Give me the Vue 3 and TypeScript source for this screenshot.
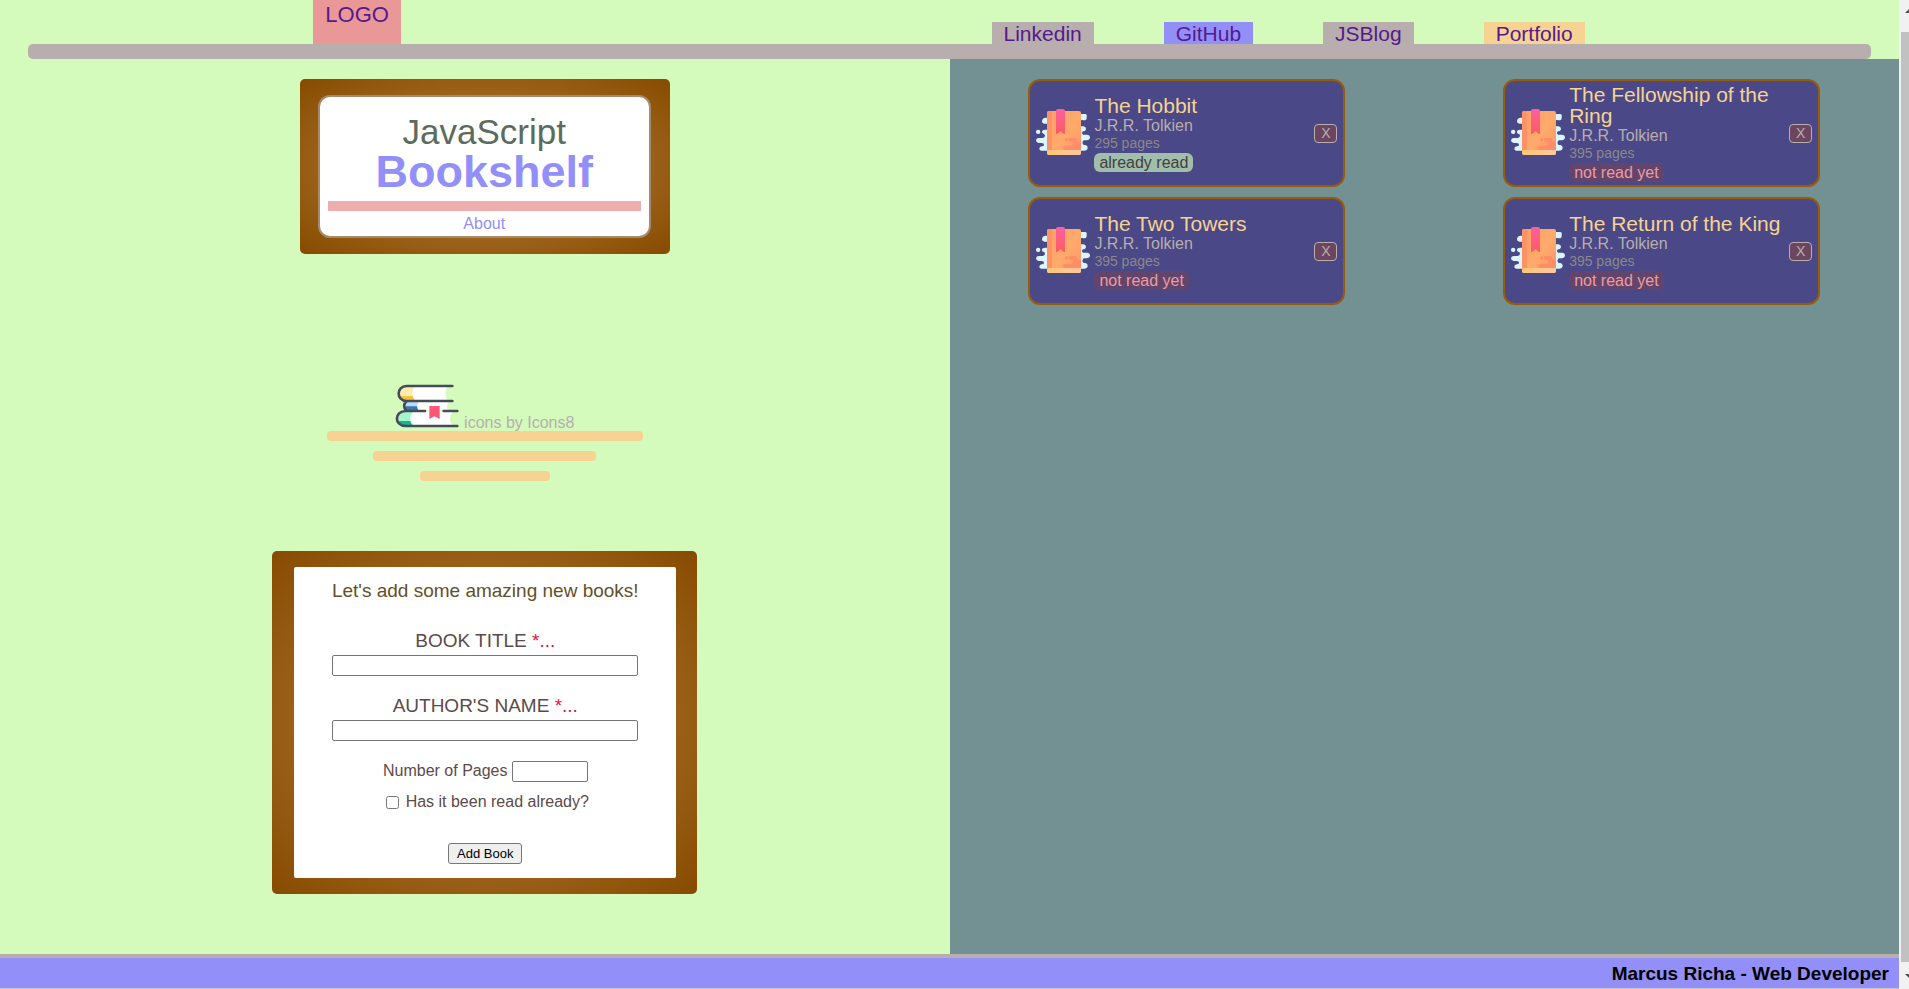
<script setup lang="ts">
import { ref } from 'vue'

interface Book {
  id: number
  title: string
  author: string
  pages: number
  read: boolean
}

const links = [
  { label: 'Linkedin', tone: 'grey' },
  { label: 'GitHub', tone: 'violet' },
  { label: 'JSBlog', tone: 'grey' },
  { label: 'Portfolio', tone: 'sand' },
]

const books = ref<Book[]>([
  { id: 1, title: 'The Hobbit', author: 'J.R.R. Tolkien', pages: 295, read: true },
  { id: 2, title: 'The Fellowship of the Ring', author: 'J.R.R. Tolkien', pages: 395, read: false },
  { id: 3, title: 'The Two Towers', author: 'J.R.R. Tolkien', pages: 395, read: false },
  { id: 4, title: 'The Return of the King', author: 'J.R.R. Tolkien', pages: 395, read: false },
])

const title = ref('')
const author = ref('')
const pages = ref<number | ''>('')
const read = ref(false)

function addBook() {
  if (!title.value || !author.value) return
  books.value.push({
    id: Date.now(),
    title: title.value,
    author: author.value,
    pages: Number(pages.value),
    read: read.value,
  })
  title.value = ''
  author.value = ''
  pages.value = ''
  read.value = false
}

function removeBook(id: number) {
  books.value = books.value.filter((book) => book.id !== id)
}
</script>

<template>
  <div class="window">
    <div class="page">
      <header>
        <div class="tabs">
          <div class="brand">
            <a class="logo" href="#">LOGO</a>
          </div>
          <nav>
            <a v-for="link in links" :key="link.label" href="#" :class="['tab', link.tone]">{{ link.label }}</a>
          </nav>
        </div>
        <div class="bar"></div>
      </header>

      <main>
        <section class="side">
          <div class="wood sign">
            <div class="plate">
              <h1>JavaScript <strong>Bookshelf</strong></h1>
              <div class="rule"></div>
              <a class="about" href="#">About</a>
            </div>
          </div>

          <div class="credit">
            <div class="credit-line">
              <svg class="stack" viewBox="285 39 192 138" aria-hidden="true">
                <path d="M318 49H442Q430 70 443 91H318Q299 89 299 70Q299 51 318 49Z" fill="#fff" />
                <path d="M318 49H345Q329 70 344 91H318Q299 89 299 70Q299 51 318 49Z" fill="#ffecae" />
                <path d="M301 78H338Q340 86 344 91H318Q306 90 301 78Z" fill="#f7c33c" />
                <path d="M325 95H446Q438 108 444 121H325Q314 118 314 108Q314 98 325 95Z" fill="#fff" />
                <path d="M325 95H356Q347 108 355 121H325Q314 118 314 108Q314 98 325 95Z" fill="#b5dcfd" />
                <path d="M315 109H351Q351 116 355 121H325Q317 118 315 109Z" fill="#3e72b3" />
                <path d="M314 124H460Q440 145 458 166H314Q295 163 295 145Q295 127 314 124Z" fill="#fff" />
                <path d="M314 124H340Q322 145 338 166H314Q295 163 295 145Q295 127 314 124Z" fill="#a5f5cd" />
                <path d="M296 153H331Q333 161 338 166H314Q300 164 296 153Z" fill="#16b590" />
                <path
                  d="M457 48H320C288 48 288 93 320 93H457M320 94C310 100 310 116 321 122M375 123H317C282 123 282 168 317 168H472M431 123H472"
                  fill="none" stroke="#454b57" stroke-width="8" stroke-linecap="round" />
                <path d="M388 108H419V147L403 139L388 147Z" fill="#ff5576" />
              </svg>
              <a href="#">icons by Icons8</a>
            </div>
            <div class="shelf wide"></div>
            <div class="shelf mid"></div>
            <div class="shelf short"></div>
          </div>

          <div class="wood entry">
            <form @submit.prevent="addBook">
              <h2>Let's add some amazing new books!</h2>
              <div class="field">
                <label for="title">BOOK TITLE <span class="required">*...</span></label>
                <input id="title" v-model="title" type="text" />
              </div>
              <div class="field">
                <label for="author">AUTHOR'S NAME <span class="required">*...</span></label>
                <input id="author" v-model="author" type="text" />
              </div>
              <div class="row count">
                <label for="pages">Number of Pages</label>
                <input id="pages" v-model="pages" type="number" />
              </div>
              <div class="row check">
                <input id="read" v-model="read" type="checkbox" />
                <label for="read">Has it been read already?</label>
              </div>
              <button class="add" type="submit">Add Book</button>
            </form>
          </div>
        </section>

        <section class="library">
          <article v-for="book in books" :key="book.id" class="card">
            <svg class="cover" viewBox="75 144 168 144" aria-hidden="true">
              <g fill="#dcf6ff">
                <rect x="78" y="209" width="13" height="13" rx="6" />
                <path d="M105 173H222Q230 173 230 164Q229 162 221 162H210V199H220Q228 200 228 206Q228 213 219 214Q213 219 219 224H232Q240 225 240 232Q240 240 230 241H221Q214 248 221 255H225Q233 256 233 264Q232 272 222 272H98Q88 272 88 266Q88 260 96 259Q102 259 102 254Q102 249 95 249H86Q78 248 78 241Q79 234 87 234H98Q105 233 105 227Q105 222 100 221Q95 220 96 214Q97 209 105 209H112V191H104Q95 190 96 182Q97 174 105 173Z" />
                <rect x="205" y="162" width="25" height="19" rx="8" />
              </g>
              <path d="M212 181H219V198H212Z" fill="#4a4887" />
              <defs>
                <linearGradient id="cover-fill" x1="0" y1="0" x2="1" y2="1">
                  <stop offset="0" stop-color="#ff9e69" />
                  <stop offset=".55" stop-color="#ffab6a" />
                  <stop offset="1" stop-color="#ff916b" />
                </linearGradient>
                <linearGradient id="ribbon-fill" x1="0" y1="0" x2="0" y2="1">
                  <stop offset="0" stop-color="#fb609f" />
                  <stop offset="1" stop-color="#ff5b62" />
                </linearGradient>
                <linearGradient id="edge-fill" x1="0" y1="0" x2="1" y2="0">
                  <stop offset="0" stop-color="#ffc773" />
                  <stop offset="1" stop-color="#ffc7a0" />
                </linearGradient>
              </defs>
              <rect x="111" y="153" width="102" height="132" rx="6" fill="url(#cover-fill)" />
              <path d="M117 153H126V270H111V159Q111 153 117 153Z" fill="#ff9265" />
              <path d="M180 234H196Q202 234 202 240Q202 246 208 246H213V270H165Q159 269 159 263Q160 257 167 257H184Q190 256 190 250Q190 246 182 245Q176 244 176 239Q176 234 180 234ZM166 235H174V244H166Z" fill="#ff8d67" />
              <path d="M111 276Q111 270 118 270H213V279Q213 285 207 285H117Q111 285 111 279Z" fill="url(#edge-fill)" />
              <path d="M138 153Q138 147 144 147H159Q165 147 165 153V222L160 221L152 213L143 221L138 222Z" fill="url(#ribbon-fill)" />
            </svg>
            <div class="info">
              <h3>{{ book.title }}</h3>
              <p class="author">{{ book.author }}</p>
              <p class="pages">{{ book.pages }} pages</p>
              <span :class="['status', book.read ? 'done' : 'todo']">{{ book.read ? 'already read' : 'not read yet' }}</span>
            </div>
            <button class="remove" type="button" :aria-label="`X, remove ${book.title}`" @click="removeBook(book.id)">X</button>
          </article>
        </section>
      </main>

      <footer>Marcus Richa - Web Developer</footer>
    </div>

    <div class="scrollbar" aria-hidden="true">
      <svg viewBox="0 0 8 32"><path d="M4 13L8 9V13Z" fill="#505050" /></svg>
      <div class="thumb"></div>
      <svg viewBox="0 0 8 27"><path d="M4 12L8 16V12Z" fill="#505050" /></svg>
    </div>
  </div>
</template>

<style>
body {
  margin: 0;
}
</style>

<style scoped>
* {
  box-sizing: border-box;
}

.window {
  display: flex;
  min-height: 100vh;
  font-family: "Liberation Sans", Arial, sans-serif;
  font-size: 16px;
  line-height: 18px;
  background: #d4fabc;
}

.page {
  flex: 1;
  min-width: 0;
  display: flex;
  flex-direction: column;
}

a {
  text-decoration: none;
}

.tabs {
  display: grid;
  grid-template-columns: 1fr 1fr;
}

.brand,
nav {
  display: flex;
  align-items: flex-end;
}

.brand {
  padding-left: 33%;
}

nav {
  gap: 70px;
  padding-left: 42px;
}

.logo,
.tab {
  color: #551a8b;
}

.logo {
  height: 44px;
  padding: 3px 12px 0;
  font-size: 22px;
  line-height: 24px;
  background: #ea9798;
}

.tab {
  height: 22px;
  padding: 0 12px;
  font-size: 21px;
  line-height: 24px;
}

.grey {
  background: #b8aead;
}

.violet {
  background: #928ff8;
}

.sand {
  background: #f6d392;
}

.bar {
  width: 97%;
  height: 15px;
  margin: 0 auto;
  border-radius: 5px;
  background: #b8aead;
}

main {
  flex: 1;
  display: grid;
  grid-template-columns: 1fr 1fr;
}

.side {
  display: flex;
  flex-direction: column;
  align-items: center;
  padding: 20px 0 60px 20px;
}

.wood {
  border-radius: 5px;
  background: radial-gradient(#bd8541, #864b00);
}

.sign {
  width: 370px;
  padding: 16px 19px 16px 18px;
}

.plate {
  padding: 15px 8px 0;
  height: 143px;
  text-align: center;
  background: #fff;
  border: 2px solid #a68a6c;
  border-radius: 12px;
}

h1 {
  margin: 0;
  font-size: 35px;
  font-weight: 400;
  line-height: 40px;
  color: #5c6b5c;
}

h1 strong {
  display: block;
  font-size: 45px;
  line-height: 40px;
  color: #928ff8;
}

.rule {
  height: 10px;
  margin: 9px 0 4px;
  background: #eeaeae;
}

.about {
  color: #928ff8;
}

.credit {
  display: flex;
  flex-direction: column;
  align-items: center;
  gap: 10px;
  margin: 130px 0 70px;
}

.credit-line {
  display: flex;
  align-items: flex-end;
  gap: 5px;
  height: 47px;
  margin-bottom: -10px;
}

.credit-line a {
  line-height: 16px;
  color: #b8aead;
}

.stack {
  width: 64px;
  height: 46px;
  margin-bottom: 2px;
}

.shelf {
  height: 10px;
  border-radius: 4px;
  background: #f6d392;
}

.wide {
  width: 316px;
}

.mid {
  width: 223px;
}

.short {
  width: 130px;
}

.entry {
  width: 425px;
  padding: 16px 21px 16px 22px;
}

form {
  display: flex;
  flex-direction: column;
  align-items: center;
  padding: 13px 38px 14px;
  border-radius: 2px;
  background: #fff;
  color: #5b4a4a;
}

h2 {
  margin: 0 0 28px;
  font-size: 19px;
  font-weight: 400;
  line-height: 22px;
  white-space: nowrap;
  color: #63502a;
}

.field {
  display: flex;
  flex-direction: column;
  gap: 3px;
  width: 100%;
  margin-bottom: 19px;
  text-align: center;
  font-size: 19px;
  line-height: 22px;
}

.required {
  color: #dc143c;
}

input {
  height: 21px;
  margin: 0;
  border: 1px solid #767676;
  border-radius: 2px;
  background: #fff;
  font: 13px/15px "Liberation Sans", Arial, sans-serif;
}

.row {
  display: flex;
  align-items: center;
}

.count {
  align-items: baseline;
  gap: 4px;
  margin: 1px 0 11px;
}

.count input {
  width: 76px;
}

.check {
  gap: 7px;
  margin: 0 0 32px 4px;
}

.check input {
  width: 13px;
  height: 13px;
}

.add {
  width: 74px;
  height: 21px;
  padding: 0;
  border: 1px solid #767676;
  border-radius: 3px;
  background: #efefef;
  color: #000;
  font: 13px/15px "Liberation Sans", Arial, sans-serif;
}

.library {
  display: grid;
  grid-template-columns: 1fr 1fr;
  align-content: start;
  justify-items: center;
  gap: 10px 0;
  padding-top: 20px;
  background: #739093;
}

.card {
  display: flex;
  align-items: center;
  gap: 3px;
  width: 317px;
  height: 108px;
  padding: 0 6px 0 5px;
  border: 2px solid #965c0a;
  border-radius: 12px;
  background: #4a4887;
}

.cover {
  flex: none;
  width: 56px;
  height: 48px;
  margin-bottom: 2px;
}

.info {
  flex: 1;
}

.info h3,
.info p {
  margin: 0;
  font-weight: 400;
}

.info h3 {
  font-size: 21px;
  line-height: 21px;
  color: #f6d392;
}

.info .author {
  padding-top: 1px;
  line-height: 18px;
  color: #b8aead;
}

.info .pages {
  margin-bottom: 2px;
  font-size: 14px;
  line-height: 16px;
  color: #8b8789;
}

.status {
  display: block;
  width: fit-content;
  padding: 0 5px;
  line-height: 19px;
  border-radius: 6px;
}

.done {
  background: #a1bdab;
  color: #41403f;
}

.todo {
  background: #62456c;
  color: #f09a9e;
}

.remove {
  flex: none;
  width: 23px;
  height: 19px;
  padding: 0;
  border: 1px solid #b8aead;
  border-radius: 4px;
  background: #6c4660;
  color: #b8aead;
  font: 14px/17px "Liberation Sans", Arial, sans-serif;
}

footer {
  padding: 5px 10px 3px;
  border-top: 4px solid #b8aead;
  border-bottom: 1px solid #c6c6cc;
  background: #928ff8;
  color: #000;
  font-size: 19px;
  font-weight: 700;
  line-height: 22px;
  text-align: right;
}

.scrollbar {
  display: flex;
  flex-direction: column;
  width: 10px;
  padding-left: 2px;
  background: #f1f1f1;
}

.scrollbar svg {
  flex: none;
  width: 8px;
}

.thumb {
  flex: 1;
  background: #c1c1c1;
}
</style>
